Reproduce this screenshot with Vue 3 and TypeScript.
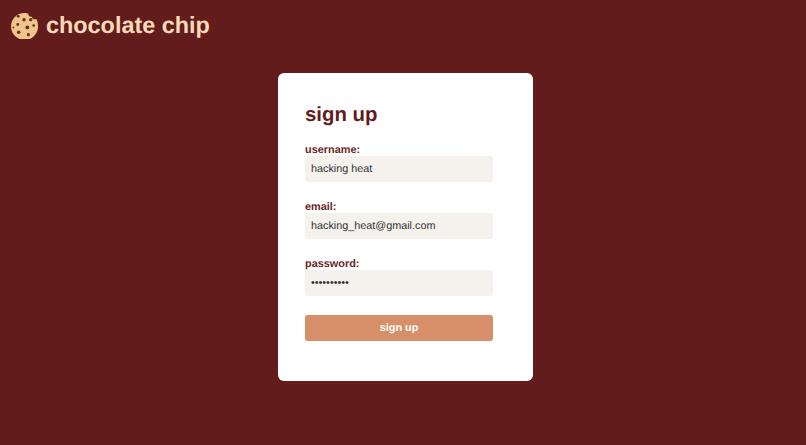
<script setup lang="ts">
const chips: [number, number, number][] = [
  [7.5, 4.5, 1.5], [13.5, 8, 1.8], [20.5, 8, 1.7], [7, 13, 1.5], [17, 16, 2], [23.5, 14, 1.4], [8, 21, 1.8], [18, 23.5, 1.6], [2.5, 16, 0.9],
]
const fields = [
  { label: 'username:', type: 'text', value: 'hacking heat' },
  { label: 'email:', type: 'text', value: 'hacking_heat@gmail.com' },
  { label: 'password:', type: 'password', value: 'hackingheat'.slice(0, 10) },
]
</script>

<template>
  <div class="page">
    <header class="brand">
      <svg class="logo" width="27" height="27" viewBox="0 0 28 28">
        <path d="M14 1 C15.5 1 17 1.2 18 1.8 C17.8 4 19.6 5.4 21.6 4.8 C22 7 24.4 8.2 26.2 7.2 C27.4 9.2 28 11.5 28 14 A14 14 0 1 1 14 1 Z" fill="#f2c48a" />
        <circle v-for="(c, i) in chips" :key="i" :cx="c[0]" :cy="c[1]" :r="c[2]" fill="#5c3324" />
      </svg>
      <span class="name">chocolate chip</span>
    </header>
    <main class="center">
      <form class="card" @submit.prevent>
        <h1>sign up</h1>
        <label v-for="f in fields" :key="f.label" class="field">
          <span>{{ f.label }}</span>
          <input :type="f.type" :value="f.value" />
        </label>
        <button type="submit">sign up</button>
      </form>
    </main>
  </div>
</template>

<style>
html, body { margin: 0; background: #621c1c; }
</style>

<style scoped>
.page {
  height: 445px;
  box-sizing: border-box;
  background: #621c1c;
  font-family: "Liberation Sans", Arial, sans-serif;
  overflow: hidden;
  text-rendering: geometricPrecision;
}
.brand {
  display: flex;
  align-items: center;
  gap: 8px;
  padding: 11px 0 0 11px;
  height: 28px;
}
.logo { flex: none; }
.name {
  color: #fcd9b8;
  font-size: 23.4px;
  font-weight: 700;
}
.center {
  display: flex;
  justify-content: center;
  padding: 34px 0 0 5px;
}
.card {
  width: 255px;
  height: 308px;
  box-sizing: border-box;
  background: #fff;
  border-radius: 6px;
  padding: 30px 40px 0 27px;
  display: flex;
  flex-direction: column;
}
h1 {
  margin: 0 0 16px;
  color: #621c1c;
  font-size: 20.4px;
  line-height: 25px;
  font-weight: 700;
}
.field {
  display: flex;
  flex-direction: column;
  margin-bottom: 19px;
  color: #6a2626;
  font-size: 10.9px;
  font-weight: 700;
}
.field span { height: 12px; line-height: 13px; }
input {
  height: 26px;
  box-sizing: border-box;
  border: none;
  border-radius: 3px;
  background: #f5f2ed;
  padding: 0 6px;
  font: 400 10.8px "Liberation Sans", Arial, sans-serif;
  color: #333;
  outline: none;
  text-rendering: geometricPrecision;
}
button {
  height: 26px;
  border: none;
  border-radius: 3px;
  background: #d68f68;
  color: #fff;
  font: 700 10.9px "Liberation Sans", Arial, sans-serif;
  padding: 0;
  text-rendering: geometricPrecision;
}
</style>
